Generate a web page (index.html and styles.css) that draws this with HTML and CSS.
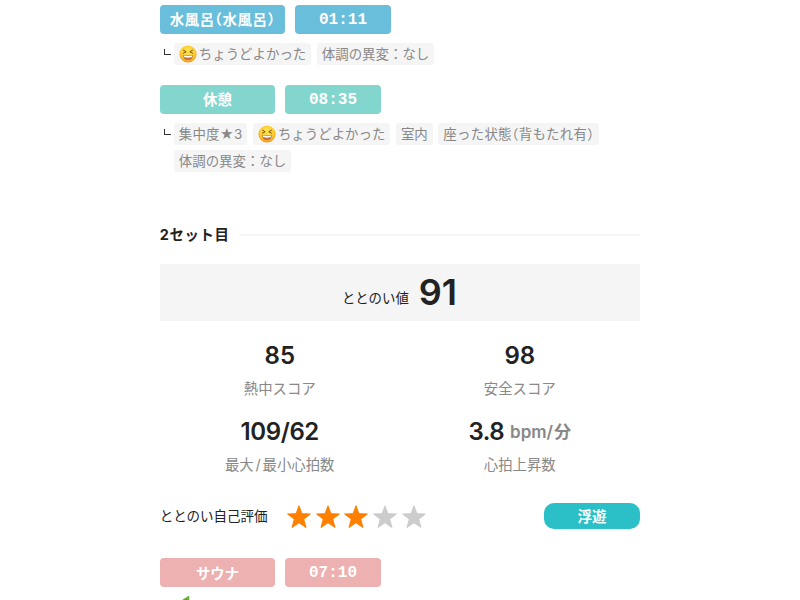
FILE: index.html
```html
<!DOCTYPE html>
<html lang="ja">
<head>
    <meta charset="UTF-8">
    <meta name="viewport" content="width=device-width, initial-scale=1.0">
    <title>サウナ記録</title>
    <link rel="stylesheet" href="styles.css">
</head>
<body>
    <svg class="defs" width="0" height="0">
        <defs>
            <radialGradient id="face-fill" cx="50%" cy="35%" r="65%">
                <stop offset="0" stop-color="#ffe54d"/>
                <stop offset="0.65" stop-color="#fcc92f"/>
                <stop offset="1" stop-color="#ee9523"/>
            </radialGradient>
            <symbol id="face" viewBox="0 0 18 18">
                <circle cx="9" cy="9" r="8.6" fill="url(#face-fill)"/>
                <path d="M4.5 5.2 7.2 6.8 4.5 8.2M13.5 5.2 10.8 6.8 13.5 8.2" fill="none" stroke="#67401a" stroke-width="0.9" stroke-linecap="round" stroke-linejoin="round"/>
                <path d="M4.2 10c3.2.7 6.4.7 9.6 0 0 3.2-2 5-4.800 5s-4.800-1.800-4.800-5z" fill="#9a6130"/>
                <path d="M4.700 10.500c2.800.5 5.800.5 8.600 0l-.4 1.800c-2.600.5-5.200.5-7.800 0z" fill="#fff"/>
                <path d="M6.200 13.800c1.600-1.100 4-1.100 5.600 0-1.600 1.300-4 1.300-5.600 0z" fill="#e8704b"/>
            </symbol>
            <symbol id="star" viewBox="0 0 24 24">
                <path d="M12 .8 14.900 8.700 23.400 9 16.700 14.200 19 22.500 12 17.700 5 22.500 7.300 14.200.6 9 9.100 8.700z" fill="currentColor" stroke="currentColor" stroke-width="1" stroke-linejoin="round"/>
            </symbol>
        </defs>
    </svg>

    <main class="record">
        <section class="step step-water">
            <div class="step-head">
                <span class="label wide">水風呂（水風呂）</span>
                <span class="label time">01:11</span>
            </div>
            <div class="step-body">
                <span class="branch"></span>
                <div class="tags">
                    <span class="tag"><svg class="face"><use href="#face"/></svg>ちょうどよかった</span>
                    <span class="tag">体調の異変：なし</span>
                </div>
            </div>
        </section>

        <section class="step step-rest">
            <div class="step-head">
                <span class="label">休憩</span>
                <span class="label time">08:35</span>
            </div>
            <div class="step-body">
                <span class="branch"></span>
                <div class="tags">
                    <span class="tag focus">集中度★3</span>
                    <span class="tag"><svg class="face"><use href="#face"/></svg>ちょうどよかった</span>
                    <span class="tag">室内</span>
                    <span class="tag posture">座った状態（背もたれ有）</span>
                    <span class="tag">体調の異変：なし</span>
                </div>
            </div>
        </section>

        <h2 class="set-title">2セット目</h2>

        <div class="total">
            <span class="total-label">ととのい値</span>
            <span class="total-value">91</span>
        </div>

        <div class="scores">
            <div class="score">
                <div class="value">85</div>
                <div class="name">熱中スコア</div>
            </div>
            <div class="score">
                <div class="value">98</div>
                <div class="name">安全スコア</div>
            </div>
            <div class="score">
                <div class="value heart">109/62</div>
                <div class="name">最大<span class="slash">/</span>最小心拍数</div>
            </div>
            <div class="score">
                <div class="value rise">3.8<span class="unit">bpm/<span class="minute">分</span></span></div>
                <div class="name">心拍上昇数</div>
            </div>
        </div>

        <div class="rating">
            <span class="rating-label">ととのい自己評価</span>
            <div class="stars">
                <svg class="star on"><use href="#star"/></svg>
                <svg class="star on"><use href="#star"/></svg>
                <svg class="star on"><use href="#star"/></svg>
                <svg class="star"><use href="#star"/></svg>
                <svg class="star"><use href="#star"/></svg>
            </div>
            <span class="mood">浮遊</span>
        </div>

        <section class="step step-sauna">
            <div class="step-head">
                <span class="label">サウナ</span>
                <span class="label time">07:10</span>
            </div>
            <div class="step-body">
                <svg class="pepper" viewBox="0 0 18 18">
                    <path d="M3.500 4C5 2 7 2.500 8 .8L9.300 0l1.200.8C10.200 2.500 10 3.500 10.500 4.500L6 6z" fill="#62b32a"/>
                    <path d="M5 4c3-1 6 0 6 3 0 5-3 9-9 10 3-4 1-9 3-13z" fill="#d8322a"/>
                </svg>
            </div>
        </section>
    </main>
</body>
</html>
```
FILE: styles.css
```css
* {
    box-sizing: border-box;
}
body {
    margin: 0;
    height: 600px;
    overflow: hidden;
    background: #fff;
    color: #222;
    font-family: Inter, "Noto Sans CJK JP", sans-serif;
}
.defs {
    display: block;
}
.record {
    width: 480.5px;
    margin: 0 auto;
    padding-top: 5px;
}
.step-head {
    display: flex;
    gap: 9.5px;
}
.label {
    display: flex;
    align-items: center;
    justify-content: center;
    width: 115.5px;
    height: 29px;
    padding-bottom: 2px;
    border-radius: 4px;
    color: #fff;
    font-size: 14.4px;
    font-weight: 700;
    white-space: nowrap;
}
.label.wide {
    width: 125.5px;
    font-feature-settings: "halt";
    letter-spacing: 0.6px;
}
.label.time {
    width: 96.5px;
    padding-bottom: 0;
    font-family: "Liberation Mono", monospace;
    font-size: 16px;
}
.step-water .label {
    background: #68bedb;
}
.step-rest .label {
    background: #83d6ce;
}
.step-sauna .label {
    background: #eeb1b1;
}
.step-body {
    display: flex;
    padding-top: 9px;
}
.branch {
    width: 7px;
    height: 6px;
    margin: 6px 2.5px 0 4.5px;
    border-left: 1px solid #333;
    border-bottom: 1px solid #333;
}
.tags {
    display: flex;
    flex: 1;
    flex-wrap: wrap;
    gap: 5px 5.5px;
}
.tag {
    display: flex;
    align-items: center;
    height: 22px;
    padding: 0 5px 2px;
    border-radius: 3px;
    background: #f5f5f5;
    color: #888;
    font-size: 13.45px;
    white-space: nowrap;
}
.tag.focus {
    letter-spacing: 0.2px;
}
.tag.posture {
    font-feature-settings: "halt";
    letter-spacing: 0.25px;
}
.face {
    width: 18px;
    height: 18px;
    margin: 1px 2px 0 0;
}
.step-rest {
    margin-top: 20px;
}
.set-title {
    display: flex;
    align-items: center;
    gap: 10px;
    height: 24px;
    margin: 51px 0 17px;
    font-size: 14.4px;
    font-weight: 700;
    letter-spacing: 0.6px;
    line-height: 20px;
    padding-bottom: 1px;
}
.set-title::after {
    content: "";
    flex: 1;
    height: 2px;
    margin-top: 1px;
    background: #f5f5f5;
}
.total {
    display: flex;
    align-items: baseline;
    justify-content: center;
    gap: 10px;
    height: 57px;
    padding-right: 1px;
    background: #f5f5f5;
    line-height: 57px;
}
.total-label {
    position: relative;
    top: -2px;
    font-size: 13.4px;
}
.total-value {
    font-size: 36px;
    font-weight: 600;
}
.scores {
    display: grid;
    grid-template-columns: 240px 240px;
    row-gap: 17px;
    margin-top: 20px;
    text-align: center;
}
.value {
    height: 30px;
    font-size: 24px;
    font-weight: 600;
    line-height: 30px;
}
.value.heart {
    letter-spacing: -0.4px;
}
.value.rise {
    letter-spacing: -0.5px;
}
.unit {
    position: relative;
    top: -2px;
    margin-left: 6px;
    color: #888;
    font-size: 17px;
    letter-spacing: 0;
}
.minute {
    margin-left: 1px;
}
.name {
    height: 29px;
    padding-top: 4px;
    color: #888;
    font-size: 14.4px;
    line-height: 28px;
}
.slash {
    margin: 0 1.8px;
}
.rating {
    display: flex;
    align-items: center;
    height: 28px;
    margin-top: 26px;
}
.rating-label {
    width: 127px;
    padding-bottom: 2px;
    font-size: 13.5px;
}
.stars {
    display: flex;
    gap: 4.8px;
}
.star {
    width: 24px;
    height: 24px;
    margin-top: 1px;
    color: #ccc;
}
.star.on {
    color: #ff7f00;
}
.mood {
    width: 96.5px;
    height: 26px;
    margin-left: auto;
    border-radius: 10px;
    background: #2bc0c8;
    color: #fff;
    font-size: 14.4px;
    font-weight: 700;
    line-height: 27px;
    text-align: center;
}
.step-sauna {
    margin-top: 28px;
}
.step-sauna .label {
    padding-bottom: 1px;
}
.step-sauna .label.time {
    padding: 1px 0 0;
}
.pepper {
    width: 18px;
    height: 18px;
    margin-left: 19px;
}
```
